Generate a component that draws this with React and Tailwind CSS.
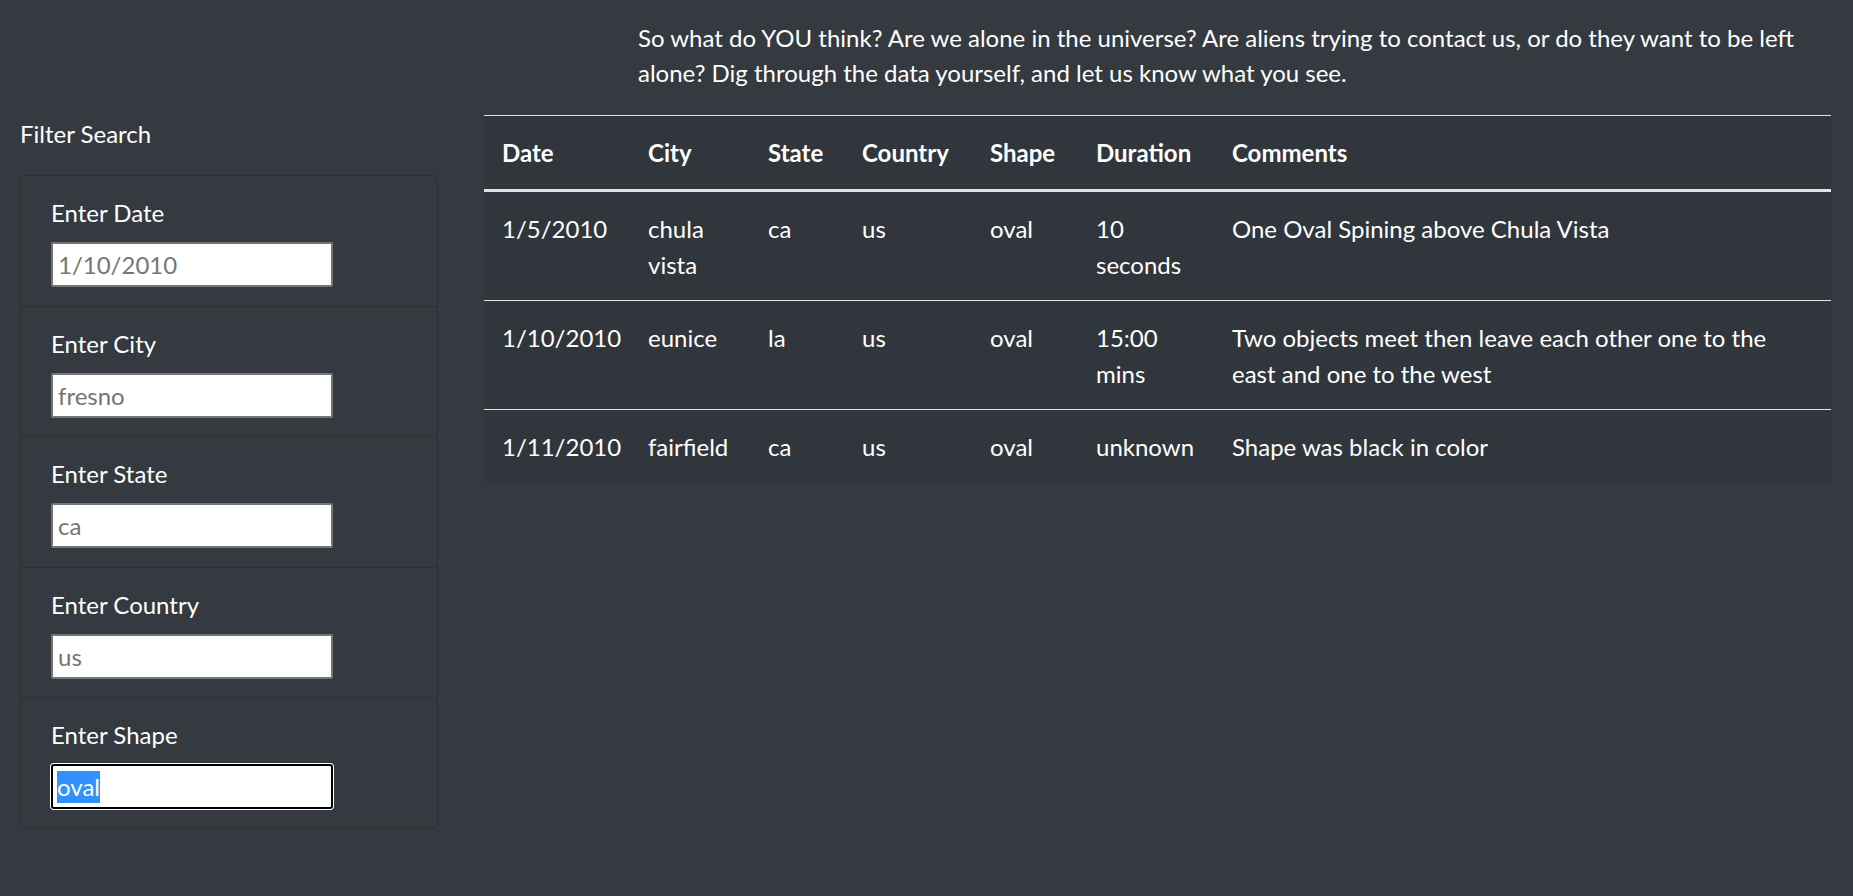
import { useState } from 'react'

const sightings=[
  {date:'1/5/2010',city:'chula vista',state:'ca',country:'us',shape:'oval',duration:'10 seconds',comments:'One Oval Spining above Chula Vista'},
  {date:'1/10/2010',city:'eunice',state:'la',country:'us',shape:'oval',duration:'15:00 mins',comments:'Two objects meet then leave each other one to the east and one to the west'},
  {date:'1/11/2010',city:'fairfield',state:'ca',country:'us',shape:'oval',duration:'unknown',comments:'Shape was black in color'},
];

const filtres=[
  {k:'date',l:'Enter Date',p:'1/10/2010'},
  {k:'city',l:'Enter City',p:'fresno'},
  {k:'state',l:'Enter State',p:'ca'},
  {k:'country',l:'Enter Country',p:'us'},
];

const cols=[
  {k:'date',l:'Date',w:'w-[146px]'},
  {k:'city',l:'City',w:'w-[120px]'},
  {k:'state',l:'State',w:'w-[94px]'},
  {k:'country',l:'Country',w:'w-[128px]'},
  {k:'shape',l:'Shape',w:'w-[106px]'},
  {k:'duration',l:'Duration',w:'w-[136px]'},
  {k:'comments',l:'Comments',w:''},
];

export default function App(){
  const [vals,setVals]=useState({date:'',city:'',state:'',country:''});

  return <div className="min-h-screen bg-[#343a40] text-white font-[family-name:Lato,sans-serif] text-[24px] leading-[36px] px-[20px] pt-[20px]">
    {/* intro */}
    <p className="ml-[618px] mr-[2px] leading-[35px]">So what do YOU think? Are we alone in the universe? Are aliens trying to contact us, or do they want to be left alone? Dig through the data yourself, and let us know what you see.</p>

    <div className="flex gap-[46px] mt-[25px]">
      {/* Filtres */}
      <aside className="w-[418px] shrink-0 pt-[1px]">
        <h4>Filter Search</h4>
        <div className="mt-[23px] rounded-[6px] border border-[#2c3035]">
          {filtres.map((f,i)=>(
            <div key={f.k} className={"px-[30px] pt-[19px] pb-[18.5px] "+(i>0?'border-t border-[#2c3035]':'')}>
              <label className="block">{f.l}</label>
              <input value={vals[f.k]} onChange={e=>setVals({...vals,[f.k]:e.target.value})} placeholder={f.p}
                className="mt-[11px] block w-[282px] h-[45px] bg-white text-black border-2 border-[#767676] rounded-[2px] px-[5px] placeholder:text-[#757575] outline-none"/>
            </div>
          ))}
          <div className="px-[30px] pt-[19px] pb-[18.5px] border-t border-[#2c3035]">
            <label className="block">Enter Shape</label>
            <div className="mt-[11px] w-[282px] h-[45px] bg-white border-2 border-black rounded-[3px] shadow-[0_0_0_1px_white] pl-[4px] flex items-center">
              <span className="bg-[#3390ff] text-white leading-[32px]">oval</span>
            </div>
          </div>
        </div>
      </aside>

      {/* Table */}
      <table className="w-[1347px] table-fixed border-collapse bg-[#31353c] self-start">
        <thead>
          <tr className="border-t border-[#dee2e6]">
            {cols.map(c=><th key={c.k} className={"text-left font-bold px-[18px] pt-[19px] pb-[18px] border-b-[3px] border-[#dee2e6] "+c.w}>{c.l}</th>)}
          </tr>
        </thead>
        <tbody>
          {sightings.map((s,i)=>(
            <tr key={i} className={i>0?'border-t border-[#dee2e6]':''}>
              {cols.map(c=><td key={c.k} className="px-[18px] pt-[19px] pb-[17px] align-top">{s[c.k]}</td>)}
            </tr>
          ))}
        </tbody>
      </table>
    </div>
  </div>;
}
